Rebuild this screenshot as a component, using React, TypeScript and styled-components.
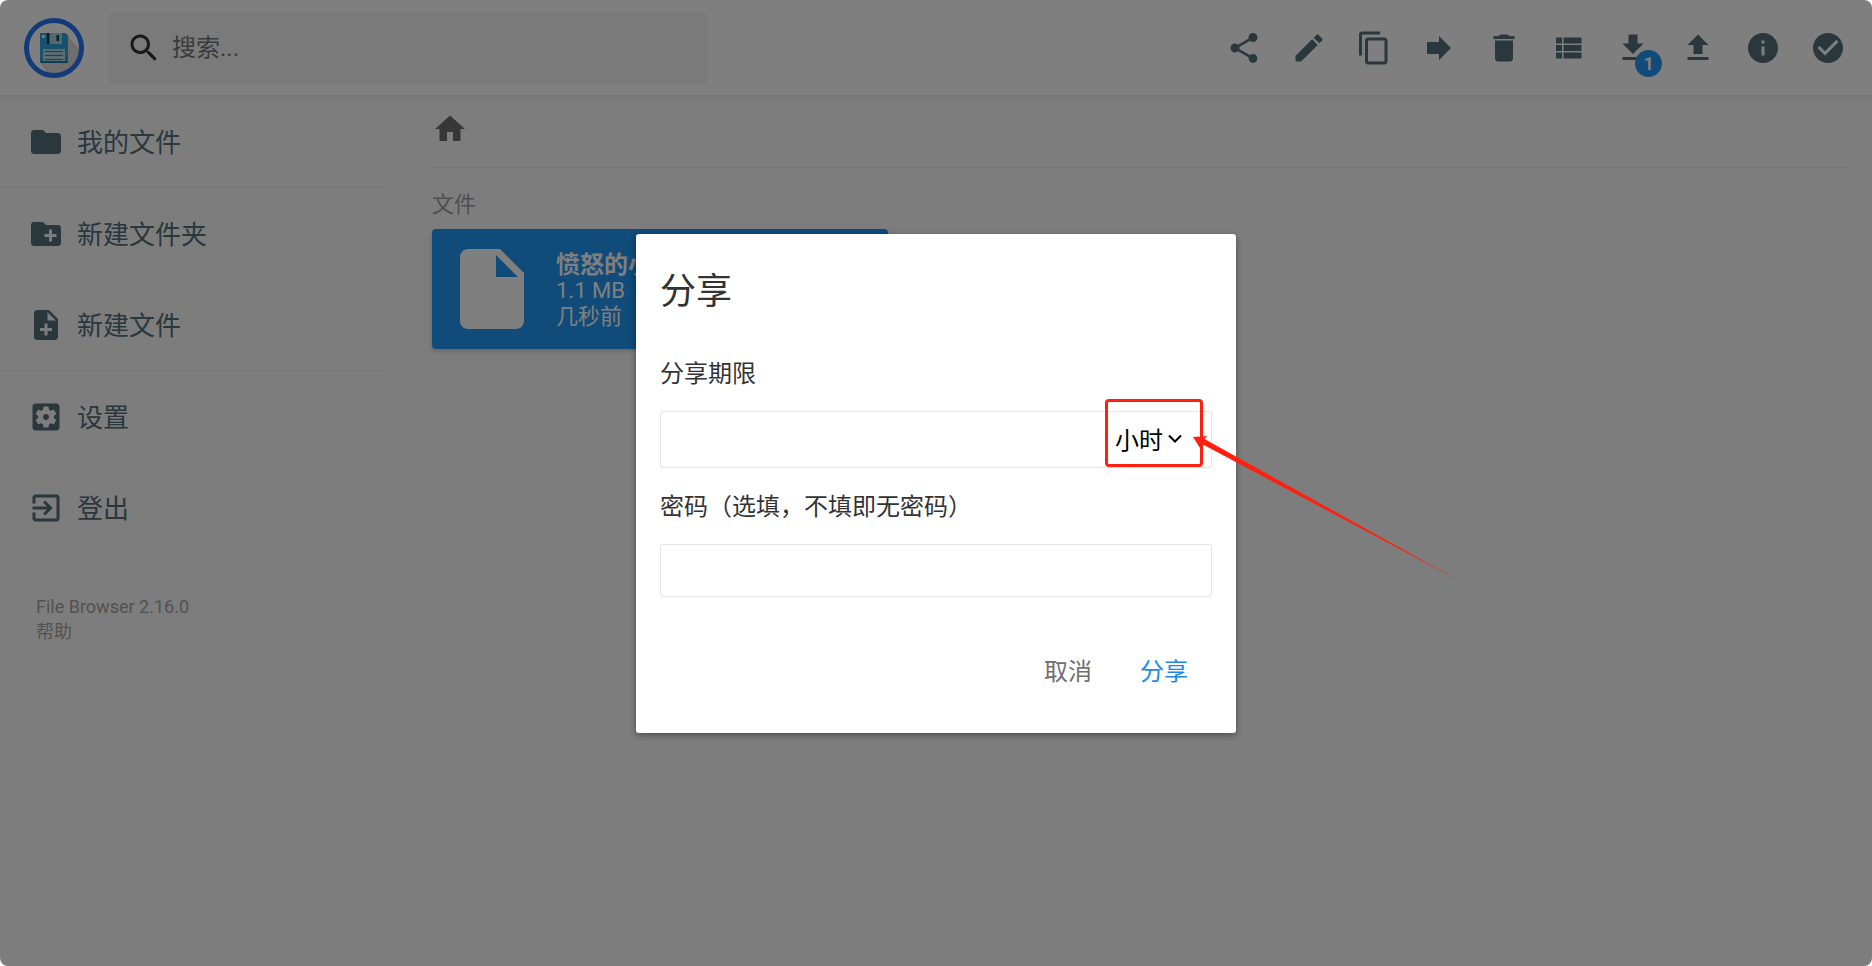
import React from "react";
import styled, { createGlobalStyle } from "styled-components";

const GlobalStyle = createGlobalStyle`
  *, *::before, *::after { box-sizing: border-box; }
  html, body, #root { height: 100%; }
  body {
    margin: 0;
    background: #fff;
    color: #333;
    font-family: Roboto, "Noto Sans CJK SC", sans-serif;
    font-size: 24px;
  }
  button, input, select { font: inherit; color: inherit; }
`;

const Page = styled.div`
  position: relative;
  min-height: 100vh;
  display: flex;
  flex-direction: column;
  background: #fafafa;
  border-radius: 8px;
  overflow: hidden;
`;

const Header = styled.header`
  display: flex;
  align-items: center;
  height: 96px;
  padding: 0 14px 0 24px;
  background: #fff;
  border-bottom: 1px solid rgba(0, 0, 0, 0.075);
  box-shadow: 0 0 8px rgba(0, 0, 0, 0.1);
`;

const Logo = styled.svg`
  width: 60px;
  height: 60px;
  flex: none;
`;

const Search = styled.label`
  display: flex;
  align-items: center;
  gap: 10px;
  flex: 0 1 600px;
  height: 72px;
  margin-left: 24px;
  padding: 0 18px;
  background: #f5f5f5;
  border-radius: 6px;
`;

const SearchInput = styled.input`
  flex: 1;
  min-width: 0;
  padding: 0;
  border: 0;
  outline: 0;
  background: transparent;
  line-height: 36px;
  &::placeholder { color: #757575; opacity: 1; }
`;

const Actions = styled.div`
  display: flex;
  justify-content: space-between;
  width: 644px;
  margin-left: auto;
`;

const Action = styled.button`
  position: relative;
  display: flex;
  padding: 12px;
  border: 0;
  border-radius: 50%;
  background: transparent;
  color: #546e7a;
  cursor: pointer;
`;

const Counter = styled.span`
  position: absolute;
  right: 1px;
  bottom: 1px;
  width: 27px;
  height: 27px;
  border-radius: 50%;
  background: #2196f3;
  color: #fff;
  font-size: 18px;
  font-weight: 700;
  line-height: 27px;
  text-align: center;
`;

const Svg = styled.svg<{ $size: number }>`
  width: ${(p) => p.$size}px;
  height: ${(p) => p.$size}px;
  flex: none;
  fill: currentColor;
`;

const Body = styled.div`
  display: flex;
  flex: 1;
`;

const Sidebar = styled.nav`
  width: 384px;
  flex: none;
`;

const NavGroup = styled.div<{ $divided?: boolean }>`
  border-bottom: ${(p) => (p.$divided ? "1px solid rgba(0, 0, 0, 0.05)" : "0")};
`;

const NavItem = styled.button`
  display: flex;
  align-items: center;
  gap: 13px;
  width: 100%;
  height: 91px;
  padding: 0 28px;
  border: 0;
  background: transparent;
  color: #546e7a;
  font-size: 26px;
  cursor: pointer;
`;

const NavLabel = styled.span`
  padding-bottom: 3px;
`;

const Credits = styled.div`
  display: flex;
  flex-direction: column;
  align-items: flex-start;
  padding: 41px 36px;
  color: #a5a5a5;
  font-size: 18px;
  line-height: 25px;
  a { color: inherit; text-decoration: none; }
`;

const Main = styled.main`
  flex: 1;
  min-width: 0;
  padding: 0 24px 0 48px;
`;

const Breadcrumbs = styled.div`
  display: flex;
  align-items: center;
  height: 72px;
  padding-bottom: 6px;
  border-bottom: 1px solid rgba(0, 0, 0, 0.05);
  a { display: flex; color: #6f6f6f; }
`;

const SectionTitle = styled.h2`
  margin: 19px 0 6px;
  color: #9e9e9e;
  font-size: 22px;
  font-weight: 400;
  line-height: 36px;
`;

const FileCard = styled.article`
  display: flex;
  align-items: center;
  gap: 16px;
  width: 456px;
  max-width: 100%;
  padding: 12px;
  border-radius: 4px;
  background: #2196f3;
  color: #fff;
  box-shadow: 0 2px 4px rgba(0, 0, 0, 0.2);
`;

const FileText = styled.div`
  min-width: 0;
  padding-top: 3px;
  font-size: 22px;
  line-height: 26px;
`;

const FileName = styled.div`
  overflow: hidden;
  font-size: 24px;
  font-weight: 700;
  white-space: nowrap;
  text-overflow: ellipsis;
`;

const Overlay = styled.div`
  position: absolute;
  inset: 0;
  display: flex;
  align-items: center;
  justify-content: center;
  background: rgba(0, 0, 0, 0.5);
`;

const Dialog = styled.form`
  width: 600px;
  padding: 37px 24px 31px;
  border-radius: 3px;
  background: #fff;
  box-shadow: 0 2px 6px rgba(0, 0, 0, 0.4);
`;

const DialogTitle = styled.h1`
  margin: 0 0 46px;
  font-size: 36px;
  font-weight: 400;
  line-height: 42px;
`;

const FieldLabel = styled.label`
  display: block;
  line-height: 30px;
`;

const InputGroup = styled.div`
  display: flex;
  height: 57px;
  margin: 22px 0 24px;
  border: 1px solid #e6e6e6;
  border-radius: 2px;
`;

const DurationInput = styled.input`
  flex: 1;
  min-width: 0;
  padding: 0 12px;
  border: 0;
  outline: 0;
  background: transparent;
`;

const UnitPicker = styled.div`
  position: relative;
  display: flex;
  width: 98px;
  margin-right: 8px;
  color: #000;
`;

const UnitSelect = styled.select`
  width: 100%;
  padding: 3px 0 0 10px;
  border: 0;
  outline: 0;
  background: transparent;
  appearance: none;
`;

const UnitChevron = styled.svg`
  position: absolute;
  top: 22px;
  right: 21px;
  width: 14px;
  height: 9px;
  fill: none;
  stroke: currentColor;
  stroke-width: 2;
  pointer-events: none;
`;

const Highlight = styled.div`
  position: absolute;
  inset: -13px 0 0 0;
  border: 3px solid #ff2010;
  border-radius: 4px;
  pointer-events: none;
`;

const Pointer = styled.svg`
  position: absolute;
  top: 24px;
  left: 88px;
  width: 264px;
  height: 144px;
  fill: #ff2010;
  pointer-events: none;
`;

const PasswordInput = styled.input`
  display: block;
  width: 100%;
  height: 53px;
  margin-top: 22px;
  padding: 0 12px;
  border: 1px solid #e6e6e6;
  border-radius: 2px;
  outline: 0;
`;

const DialogActions = styled.div`
  display: flex;
  justify-content: flex-end;
  margin-top: 45px;
`;

const DialogButton = styled.button<{ $primary?: boolean }>`
  padding: 12px 24px;
  border: 0;
  background: transparent;
  color: ${(p) => (p.$primary ? "#1e88e5" : "#6f6f6f")};
  line-height: 36px;
  cursor: pointer;
`;

const paths = {
  search:
    "M15.5 14h-.79l-.28-.27C15.41 12.59 16 11.11 16 9.5 16 5.91 13.09 3 9.5 3S3 5.91 3 9.5 5.91 16 9.5 16c1.61 0 3.09-.59 4.23-1.57l.27.28v.79l5 4.99L20.49 19l-4.99-5zm-6 0C7.01 14 5 11.99 5 9.5S7.01 5 9.5 5 14 7.01 14 9.5 11.99 14 9.5 14z",
  share:
    "M18 16.08c-.76 0-1.44.3-1.96.77L8.91 12.7c.05-.23.09-.46.09-.7s-.04-.47-.09-.7l7.05-4.11c.54.5 1.25.81 2.04.81 1.66 0 3-1.34 3-3s-1.34-3-3-3-3 1.34-3 3c0 .24.04.47.09.7L8.04 9.81C7.5 9.31 6.79 9 6 9c-1.66 0-3 1.34-3 3s1.34 3 3 3c.79 0 1.5-.31 2.04-.81l7.12 4.16c-.05.21-.08.43-.08.65 0 1.61 1.31 2.92 2.92 2.92 1.61 0 2.92-1.31 2.92-2.92s-1.31-2.92-2.92-2.92z",
  edit:
    "M3 17.46v3.04c0 .28.22.5.5.5h3.04c.13 0 .26-.05.35-.15L17.81 9.94l-3.75-3.75L3.15 17.1c-.1.1-.15.22-.15.36zM20.71 7.04c.39-.39.39-1.02 0-1.41l-2.34-2.34c-.39-.39-1.02-.39-1.41 0l-1.83 1.83 3.75 3.75 1.83-1.83z",
  copy:
    "M16 1H4c-1.1 0-2 .9-2 2v14h2V3h12V1zm3 4H8c-1.1 0-2 .9-2 2v14c0 1.1.9 2 2 2h11c1.1 0 2-.9 2-2V7c0-1.1-.9-2-2-2zm0 16H8V7h11v14z",
  move: "M12 8V4l8 8-8 8v-4H4V8z",
  trash:
    "M6 19c0 1.1.9 2 2 2h8c1.1 0 2-.9 2-2V7H6v12zM19 4h-3.5l-1-1h-5l-1 1H5v2h14V4z",
  list:
    "M4 14h4v-4H4v4zm0 5h4v-4H4v4zM4 9h4V5H4v4zm5 5h12v-4H9v4zm0 5h12v-4H9v4zM9 5v4h12V5H9z",
  download: "M19 9h-4V3H9v6H5l7 7 7-7zM5 18v2h14v-2H5z",
  upload: "M9 16h6v-6h4l-7-7-7 7h4zm-4 2h14v2H5z",
  info:
    "M12 2C6.48 2 2 6.48 2 12s4.48 10 10 10 10-4.48 10-10S17.52 2 12 2zm1 15h-2v-6h2v6zm0-8h-2V7h2v2z",
  check:
    "M12 2C6.48 2 2 6.48 2 12s4.48 10 10 10 10-4.48 10-10S17.52 2 12 2zm-2 15l-5-5 1.41-1.41L10 14.17l7.59-7.59L19 8l-9 9z",
  folder:
    "M10 4H4c-1.1 0-1.99.9-1.99 2L2 18c0 1.1.9 2 2 2h16c1.1 0 2-.9 2-2V8c0-1.1-.9-2-2-2h-8l-2-2z",
  newFolder:
    "M20 6h-8l-2-2H4c-1.11 0-1.99.89-1.99 2L2 18c0 1.11.89 2 2 2h16c1.11 0 2-.89 2-2V8c0-1.11-.89-2-2-2zm-1 8h-3v3h-2v-3h-3v-2h3V9h2v3h3v2z",
  newFile:
    "M14 2H6c-1.1 0-1.99.9-1.99 2L4 20c0 1.1.89 2 1.99 2H18c1.1 0 2-.9 2-2V8l-6-6zm2 14h-3v3h-2v-3H8v-2h3v-3h2v3h3v2zm-3-7V3.5L18.5 9H13z",
  settings:
    "M12 10c-1.1 0-2 .9-2 2s.9 2 2 2 2-.9 2-2-.9-2-2-2zm7-7H5c-1.11 0-2 .9-2 2v14c0 1.1.89 2 2 2h14c1.11 0 2-.9 2-2V5c0-1.1-.89-2-2-2zm-1.75 9c0 .23-.02.46-.05.68l1.48 1.16c.13.11.17.3.08.45l-1.4 2.42c-.09.15-.27.21-.43.15l-1.74-.7c-.36.28-.76.51-1.18.69l-.26 1.85c-.03.17-.18.3-.35.3h-2.8c-.17 0-.32-.13-.35-.29l-.26-1.85c-.43-.18-.82-.41-1.18-.69l-1.74.7c-.16.06-.34 0-.43-.15l-1.4-2.42c-.09-.15-.05-.34.08-.45l1.48-1.16c-.03-.23-.05-.46-.05-.69 0-.23.02-.46.05-.68l-1.48-1.16c-.13-.11-.17-.3-.08-.45l1.4-2.42c.09-.15.27-.21.43-.15l1.74.7c.36-.28.76-.51 1.18-.69l.26-1.85c.03-.17.18-.3.35-.3h2.8c.17 0 .32.13.35.29l.26 1.85c.43.18.82.41 1.18.69l1.74-.7c.16-.06.34 0 .43.15l1.4 2.42c.09.15.05.34-.08.45l-1.48 1.16c.03.23.05.46.05.69z",
  logout:
    "M10.09 15.59L11.5 17l5-5-5-5-1.41 1.41L12.67 11H3v2h9.67l-2.58 2.59zM19 3H5c-1.11 0-2 .9-2 2v4h2V5h14v14H5v-4H3v4c0 1.1.89 2 2 2h14c1.1 0 2-.9 2-2V5c0-1.1-.9-2-2-2z",
  home: "M10 20v-6h4v6h5v-8h3L12 3 2 12h3v8z",
  file:
    "M6 2c-1.1 0-1.99.9-1.99 2L4 20c0 1.1.89 2 1.99 2H18c1.1 0 2-.9 2-2V8l-6-6H6zm7 7V3.5L18.5 9H13z",
};

type IconName = keyof typeof paths;

const Icon = ({ name, size = 36 }: { name: IconName; size?: number }) => (
  <Svg $size={size} viewBox="0 0 24 24" aria-hidden="true">
    <path d={paths[name]} />
  </Svg>
);

const AppLogo = () => (
  <Logo viewBox="0 0 60 60" role="img" aria-label="File Browser">
    <circle cx="30" cy="30" r="27.5" fill="#fff" />
    <path d="M43 17L56 32A27 27 0 0 1 24 56L16 44z" fill="#dcdcdc" />
    <circle cx="30" cy="30" r="27.5" fill="none" stroke="#2b74f5" strokeWidth="5" />
    <path d="M16 15h25.500l2.500 2.500v27.500H16z" fill="#2fa5d5" />
    <path d="M23 15h15v11H23z" fill="#a9d0e0" />
    <path d="M23 15h2.500v11H23zM32.500 17h2.500v6h-2.500z" fill="#0c3f66" />
    <circle cx="19.500" cy="18.500" r="1.800" fill="#e8f6fc" />
    <path d="M19 31h22v12H19z" fill="#b5d8e6" />
    <path d="M21 33h18v1H21zM21 37h18v1H21zM21 41h18v1H21z" fill="#3f7f9c" />
    <path d="M17 43.500h26v1H17z" fill="#0c4f76" />
  </Logo>
);

const actions: { icon: IconName; label: string; count?: number }[] = [
  { icon: "share", label: "分享" },
  { icon: "edit", label: "重命名" },
  { icon: "copy", label: "复制" },
  { icon: "move", label: "移动" },
  { icon: "trash", label: "删除" },
  { icon: "list", label: "切换视图" },
  { icon: "download", label: "下载", count: 1 },
  { icon: "upload", label: "上传" },
  { icon: "info", label: "信息" },
  { icon: "check", label: "选择" },
];

const navGroups: { icon: IconName; label: string }[][] = [
  [{ icon: "folder", label: "我的文件" }],
  [
    { icon: "newFolder", label: "新建文件夹" },
    { icon: "newFile", label: "新建文件" },
  ],
  [
    { icon: "settings", label: "设置" },
    { icon: "logout", label: "登出" },
  ],
];

export default function App() {
  return (
    <>
      <GlobalStyle />
      <Page>
        <Header>
          <AppLogo />
          <Search>
            <Icon name="search" />
            <SearchInput type="text" placeholder="搜索..." aria-label="搜索" />
          </Search>
          <Actions>
            {actions.map((a) => (
              <Action key={a.icon} type="button" aria-label={a.label}>
                <Icon name={a.icon} />
                {a.count && <Counter>{a.count}</Counter>}
              </Action>
            ))}
          </Actions>
        </Header>

        <Body>
          <Sidebar>
            {navGroups.map((group, i) => (
              <NavGroup key={i} $divided={i < navGroups.length - 1}>
                {group.map((item) => (
                  <NavItem key={item.icon} type="button">
                    <Icon name={item.icon} />
                    <NavLabel>{item.label}</NavLabel>
                  </NavItem>
                ))}
              </NavGroup>
            ))}
            <Credits>
              <span>File Browser 2.16.0</span>
              <a href="#help">帮助</a>
            </Credits>
          </Sidebar>

          <Main>
            <Breadcrumbs>
              <a href="#home" aria-label="主页">
                <Icon name="home" />
              </a>
            </Breadcrumbs>
            <SectionTitle>文件</SectionTitle>
            <FileCard>
              <Icon name="file" size={96} />
              <FileText>
                <FileName>愤怒的小</FileName>
                <div>1.1 MB</div>
                <div>几秒前</div>
              </FileText>
            </FileCard>
          </Main>
        </Body>

        <Overlay>
          <Dialog role="dialog" aria-labelledby="share-title" onSubmit={(e) => e.preventDefault()}>
            <DialogTitle id="share-title">分享</DialogTitle>
            <FieldLabel htmlFor="duration">分享期限</FieldLabel>
            <InputGroup>
              <DurationInput id="duration" type="text" />
              <UnitPicker>
                <UnitSelect aria-label="时间单位" defaultValue="hours">
                  <option value="hours">小时</option>
                </UnitSelect>
                <UnitChevron viewBox="0 0 14 9">
                  <path d="M1 1.5l6 6 6-6" />
                </UnitChevron>
                <Highlight />
                <Pointer viewBox="0 0 264 144">
                  <path d="M0 1L14 0L11.500 3L264 143.500L9 8L7 12z" />
                </Pointer>
              </UnitPicker>
            </InputGroup>
            <FieldLabel htmlFor="password">密码（选填，不填即无密码）</FieldLabel>
            <PasswordInput id="password" type="password" />
            <DialogActions>
              <DialogButton type="button">取消</DialogButton>
              <DialogButton type="submit" $primary>
                分享
              </DialogButton>
            </DialogActions>
          </Dialog>
        </Overlay>
      </Page>
    </>
  );
}
